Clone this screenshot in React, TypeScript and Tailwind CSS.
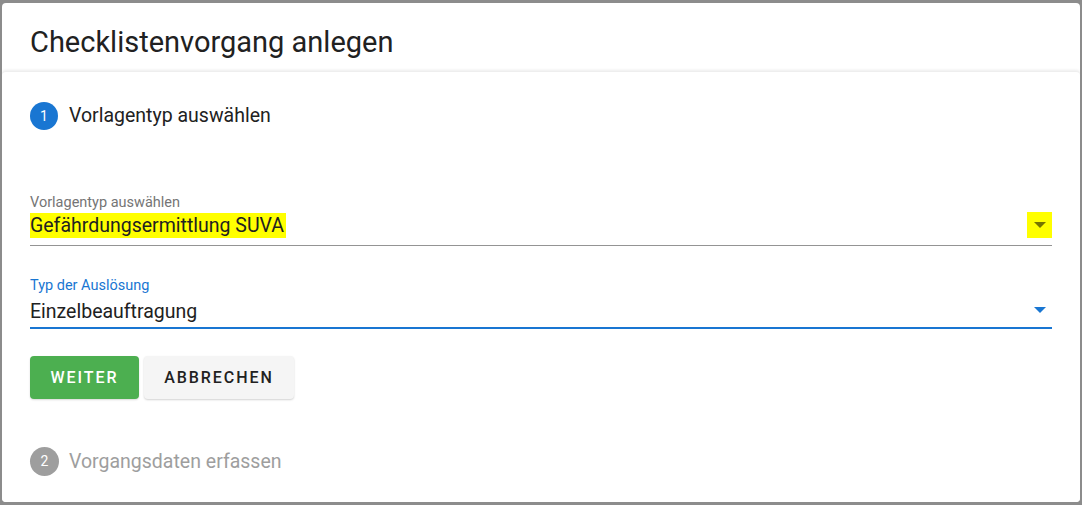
import React from "react";

function Arrow({ className }: { className: string }) {
  return (
    <svg width="12" height="6" viewBox="0 0 12 6" className={className}>
      <path d="M0 0 L12 0 L6 6 Z" fill="currentColor" />
    </svg>
  );
}

export default function App() {
  return (
    <div
      className="w-[1082px] h-[505px] bg-[#8c8c8c] pt-[3px] pl-[2px] overflow-hidden"
      style={{ fontFamily: "Roboto, 'Liberation Sans', sans-serif" }}
    >
      <div className="w-[1078px] h-[499px] bg-white rounded-[4px] flex flex-col overflow-hidden">
        <div className="h-[68px] px-[28px] flex items-start pt-[23px]">
          <h2 className="text-[29px] leading-[32px] text-[#212121] font-normal">
            Checklistenvorgang anlegen
          </h2>
        </div>
        <div className="flex-1 bg-white shadow-[0_-1px_3px_rgba(0,0,0,0.08)] border-t border-[#eeeeee] rounded-t-[4px] px-[28px] pt-[30px]">
          <div className="flex items-center gap-[11px] h-[28px]">
            <div className="w-[28px] h-[28px] rounded-full bg-[#1976d2] text-white text-[14px] flex items-center justify-center">
              1
            </div>
            <span className="text-[19.5px] text-[#212121]">Vorlagentyp auswählen</span>
          </div>

          <div className="mt-[65px] w-[1022px]">
            <div className="text-[14.5px] leading-[16px] text-[#757575]">Vorlagentyp auswählen</div>
            <div className="flex items-start justify-between h-[35px] border-b border-[#949494]">
              <span className="mt-[2px] h-[25px] text-[19.5px] leading-[25px] text-[#212121] bg-[#ffff00] pr-[2px]">
                Gefährdungsermittlung SUVA
              </span>
              <span className="mt-[1px] w-[25px] h-[26px] bg-[#ffff00] flex items-center justify-center">
                <Arrow className="text-[#757500]" />
              </span>
            </div>
          </div>

          <div className="mt-[32px] w-[1022px]">
            <div className="text-[14.5px] leading-[16px] text-[#1976d2]">Typ der Auslösung</div>
            <div className="flex items-start justify-between h-[35px] border-b-2 border-[#1976d2]">
              <span className="mt-[5px] h-[25px] text-[19.5px] leading-[25px] text-[#212121]">Einzelbeauftragung</span>
              <span className="mt-[13px] w-[25px] flex items-center justify-center">
                <Arrow className="text-[#1976d2]" />
              </span>
            </div>
          </div>

          <div className="mt-[27px] flex gap-[5px]">
            <button className="w-[109px] h-[43px] rounded-[4px] bg-[#4caf50] text-white text-[16px] font-medium tracking-[0.12em] shadow-[0_1px_2px_rgba(0,0,0,0.15)]">
              WEITER
            </button>
            <button className="w-[150px] h-[43px] rounded-[4px] bg-[#f5f5f5] text-[#212121] text-[16px] font-medium tracking-[0.12em] shadow-[0_1px_2px_rgba(0,0,0,0.18)]">
              ABBRECHEN
            </button>
          </div>

          <div className="mt-[48px] flex items-center gap-[10px] h-[29px]">
            <div className="w-[29px] h-[29px] rounded-full bg-[#9e9e9e] text-white text-[14px] flex items-center justify-center">
              2
            </div>
            <span className="text-[19.5px] text-[#9e9e9e]">Vorgangsdaten erfassen</span>
          </div>
        </div>
      </div>
    </div>
  );
}
